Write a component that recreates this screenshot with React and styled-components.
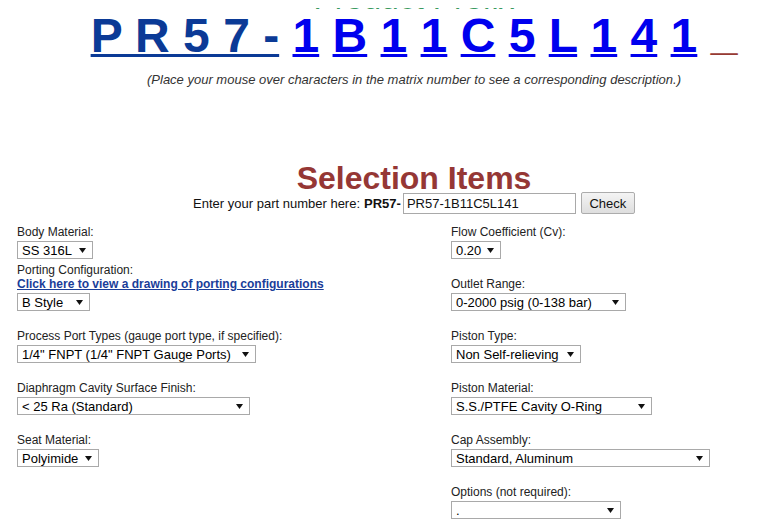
import React from "react";
import styled, { createGlobalStyle } from "styled-components";

const GlobalStyle = createGlobalStyle`
html {
  overflow: hidden;
}
body {
  margin: 8px;
  font-family: "Liberation Sans", Arial, sans-serif;
  color: #222;
  background: #fff;
}
`;

const Page = styled.div`
width: 812px;
margin-top: -20px;
`;

const PrefixTitle = styled.h2`
margin: 0;
text-align: center;
font-size: 32px;
font-weight: 400;
line-height: 20px;
color: #3a9a5e;
`;

const Matrix = styled.div`
text-align: center;
font-size: 48px;
font-weight: 700;
line-height: 56px;
white-space: pre;
`;

const MatrixLink = styled.a`
color: ${(p) => (p.$prefix ? "#0b3a96" : "#0000ee")};
text-decoration: underline;
text-decoration-thickness: 3px;
text-underline-offset: 2px;
cursor: pointer;
`;

const Trailing = styled.span`
color: #963a33;
line-height: 0;
vertical-align: 3px;
`;

const Caption = styled.p`
margin: 8px 0 0;
text-align: center;
font-size: 13px;
font-style: italic;
line-height: 16px;
color: #333;
`;

const Description = styled.div`
height: 76px;
`;

const SectionTitle = styled.h2`
margin: 0;
text-align: center;
font-size: 32px;
font-weight: 700;
line-height: 28px;
color: #953735;
`;

const PartRow = styled.div`
display: flex;
align-items: center;
justify-content: center;
height: 22px;
font-size: 13px;
color: #111;

b {
  margin-left: 4px;
  margin-right: 2px;
}
`;

const PartInput = styled.input`
box-sizing: border-box;
width: 173px;
height: 21px;
border: 1px solid #a9a9a9;
padding: 0 3px;
font-family: inherit;
font-size: 13px;
color: #111;
`;

const CheckButton = styled.button`
box-sizing: border-box;
width: 54px;
height: 22px;
margin-left: 5px;
border: 1px solid #acacac;
border-radius: 2px;
background: linear-gradient(#f4f4f4, #dedede);
font-family: inherit;
font-size: 13px;
color: #111;
padding: 0;
`;

const Columns = styled.div`
display: grid;
grid-template-columns: 434px 1fr;
padding-left: 9px;
margin-top: 11px;
`;

const Column = styled.div`
display: flex;
flex-direction: column;
align-items: flex-start;
`;

const Field = styled.div`
display: flex;
flex-direction: column;
align-items: flex-start;
margin-bottom: ${(p) => (p.$tight ? "4px" : "18px")};
`;

const Label = styled.span`
font-size: 12px;
line-height: 14px;
color: #222;
`;

const DrawingLink = styled.a`
font-size: 12px;
line-height: 14px;
font-weight: 700;
color: #1a3d99;
text-decoration: underline;
cursor: pointer;
`;

const SelectBox = styled.div`
box-sizing: border-box;
display: flex;
align-items: center;
justify-content: space-between;
width: ${(p) => p.$width}px;
height: 18px;
margin-top: 2px;
padding: 0 6px 0 4px;
border: 1px solid #a9a9a9;
background: #fff;
font-size: 13px;
color: #000;
white-space: nowrap;
`;

const Arrow = () => (
  <svg width="7" height="5" viewBox="0 0 7 5">
    <polygon points="0,0 7,0 3.5,5" fill="#111" />
  </svg>
);

function Select({ value, width }) {
  return (
    <SelectBox $width={width}>
      <span>{value}</span>
      <Arrow />
    </SelectBox>
  );
}

const chars = ["1", "B", "1", "1", "C", "5", "L", "1", "4", "1"];

export default function App() {
  return (
    <Page>
      <GlobalStyle />
      <PrefixTitle>Product Prefix</PrefixTitle>
      <Matrix>
        <MatrixLink $prefix>P R 5 7 -</MatrixLink>
        {chars.map((c, i) => (
          <React.Fragment key={i}>
            {" "}
            <MatrixLink>{c}</MatrixLink>
          </React.Fragment>
        ))}
        {" "}
        <Trailing>_</Trailing>
      </Matrix>
      <Caption>
        (Place your mouse over characters in the matrix number to see a corresponding description.)
      </Caption>
      <Description />
      <SectionTitle>Selection Items</SectionTitle>
      <PartRow>
        Enter your part number here: <b>PR57-</b>
        <PartInput defaultValue="PR57-1B11C5L141" />
        <CheckButton>Check</CheckButton>
      </PartRow>
      <Columns>
        <Column>
          <Field $tight>
            <Label>Body Material:</Label>
            <Select value="SS 316L" width={76} />
          </Field>
          <Field>
            <Label>Porting Configuration:</Label>
            <DrawingLink>Click here to view a drawing of porting configurations</DrawingLink>
            <Select value="B Style" width={73} />
          </Field>
          <Field>
            <Label>Process Port Types (gauge port type, if specified):</Label>
            <Select value={'1/4" FNPT (1/4" FNPT Gauge Ports)'} width={239} />
          </Field>
          <Field>
            <Label>Diaphragm Cavity Surface Finish:</Label>
            <Select value="< 25 Ra (Standard)" width={233} />
          </Field>
          <Field>
            <Label>Seat Material:</Label>
            <Select value="Polyimide" width={82} />
          </Field>
        </Column>
        <Column>
          <Field>
            <Label>Flow Coefficient (Cv):</Label>
            <Select value="0.20" width={50} />
          </Field>
          <Field>
            <Label>Outlet Range:</Label>
            <Select value="0-2000 psig (0-138 bar)" width={175} />
          </Field>
          <Field>
            <Label>Piston Type:</Label>
            <Select value="Non Self-relieving" width={130} />
          </Field>
          <Field>
            <Label>Piston Material:</Label>
            <Select value="S.S./PTFE Cavity O-Ring" width={201} />
          </Field>
          <Field>
            <Label>Cap Assembly:</Label>
            <Select value="Standard, Aluminum" width={259} />
          </Field>
          <Field>
            <Label>Options (not required):</Label>
            <Select value="." width={170} />
          </Field>
        </Column>
      </Columns>
    </Page>
  );
}
